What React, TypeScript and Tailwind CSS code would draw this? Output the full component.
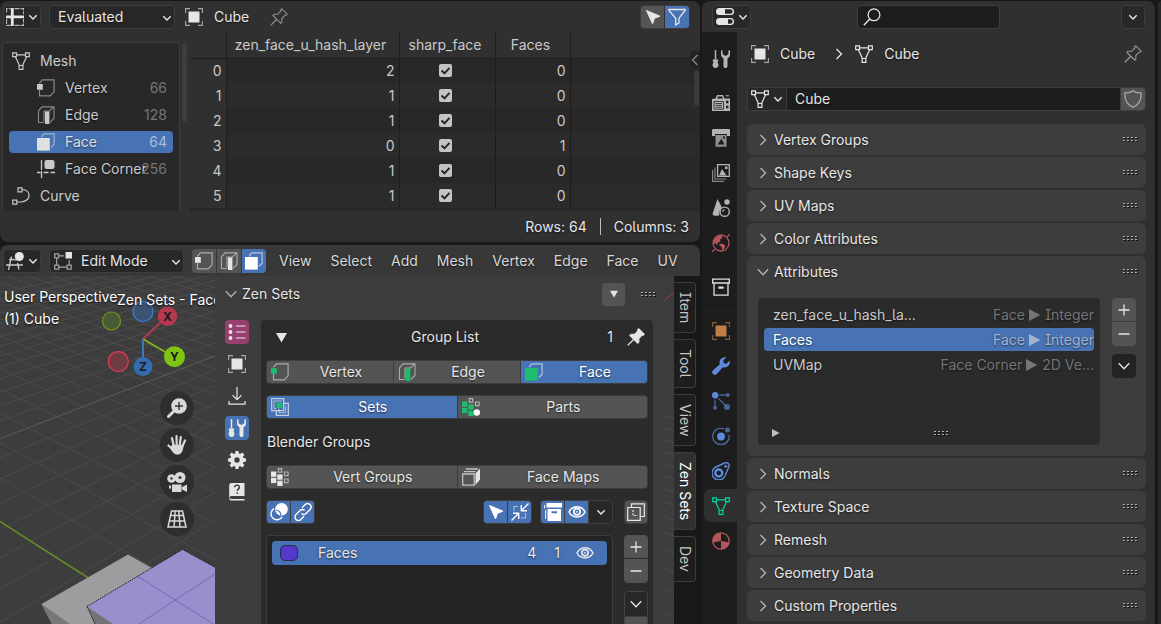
import React from "react";

type IconProps = { className?: string; accent?: string };

function Svg({ children, className = "" }: { children: React.ReactNode; className?: string }) {
  return (
    <svg viewBox="0 0 18 18" width="18" height="18" fill="none" stroke="currentColor" aria-hidden="true" className={`shrink-0 ${className}`}>
      {children}
    </svg>
  );
}

/* ---------- icons ---------- */

const ChevronDown = ({ className = "" }: IconProps) => (
  <svg viewBox="0 0 10 10" width="10" height="10" fill="none" stroke="currentColor" strokeWidth="1.4" aria-hidden="true" className={`shrink-0 ${className}`}>
    <path d="M1.3 3.2 5 7l3.7-3.8" />
  </svg>
);
const ChevronWide = ({ className = "" }: IconProps) => (
  <svg viewBox="0 0 12 12" width="12" height="12" fill="none" stroke="currentColor" strokeWidth="1.3" aria-hidden="true" className={`shrink-0 ${className}`}>
    <path d="M.8 3.2 6 8.800l5.200-5.600" />
  </svg>
);
const ChevronRight = ({ className = "" }: IconProps) => (
  <svg viewBox="0 0 8 12" width="8" height="12" fill="none" stroke="currentColor" strokeWidth="1.300" aria-hidden="true" className={`shrink-0 ${className}`}>
    <path d="M1.500 1 6.500 6 1.500 11" />
  </svg>
);
const SpreadsheetIcon = () => (
  <Svg>
    <path d="M.6 4.500V.6H4.500M8.500.6h9v5.600M.6 11v6.400h4M8.500 17.400h9V11" strokeWidth="1.100" opacity=".75" strokeDasharray="5 1" />
    <path d="M6.300 0v18M0 8.800h18" strokeWidth="2.800" />
  </Svg>
);
const ObjectIcon = ({ className = "" }: IconProps) => (
  <Svg className={className}>
    <path d="M.6 5V.6H5M13 .6h4.400V5M17.400 13v4.400H13M5 17.400H.6V13" strokeWidth="1.100" opacity=".65" />
    <rect x="3.500" y="3.500" width="11" height="11" fill="currentColor" stroke="none" />
  </Svg>
);
const PinIcon = ({ filled = false }: { filled?: boolean }) => (
  <Svg>
    <path d="M.7 17.400 6.600 11.500" strokeWidth="1.300" />
    <path d="M11.800.8 17.200 6.200l-1 1.100-1.200-.1-3.200 3.300.1 3.500-1.200 1.200-7.800-7.800L4.100 6.200l3.500.1L10.900 3l-.1-1.200z" strokeWidth="1.100" fill={filled ? "currentColor" : "none"} />
  </Svg>
);
const CursorIcon = () => (
  <Svg>
    <path d="M2.500 2.500 16 8.200 10.500 10.300 8.500 15.800z" fill="currentColor" strokeWidth="1" />
  </Svg>
);
const FilterIcon = () => (
  <Svg>
    <path d="M.9 1.500h16.200v1L11 10.200v4.600l-3.300 2.100V10.200L.9 2.500z" strokeWidth="1.300" />
  </Svg>
);
const MeshIcon = ({ className = "" }: IconProps) => (
  <Svg className={className}>
    <path d="M4.500 2.800h9M3.400 4.700l4.100 8.800M14.600 4.700l-4.100 8.800" strokeWidth="1.200" />
    <path d="M.7.8h3.800v3.800H.7zM13.500.8h3.800v3.800h-3.800zM7.100 13.500h3.800v3.800H7.100z" strokeWidth="1.200" />
  </Svg>
);
const VertexIcon = ({ accent = "currentColor" }: IconProps) => (
  <Svg>
    <path d="M2.500 4.500V4L5.500.9H17.100V12.800L13.200 16.900H2.500V11" strokeWidth="1.200" opacity=".6" />
    <rect x="0" y="5" width="5.800" height="5.800" fill={accent} stroke="none" />
  </Svg>
);
const EdgeIcon = ({ accent = "currentColor" }: IconProps) => (
  <Svg>
    <path d="M7 16.500H1.500V4.800L5 .9H17V12.200L13 16.300M7 15.500V5h5.500L16.500 1.200" strokeWidth="1.100" opacity=".6" />
    <rect x="8" y="5.500" width="4.400" height="12.500" fill={accent} stroke="none" />
  </Svg>
);
const FaceIcon = ({ accent = "currentColor" }: IconProps) => (
  <Svg>
    <path d="M4.600 4.600V3.500L6.600.9H17.100V11.500L14 14.300" strokeWidth="1.200" opacity=".6" />
    <rect x="0" y="5" width="12.800" height="12.600" fill={accent} stroke="none" />
  </Svg>
);
const CornerIcon = () => (
  <Svg>
    <rect x="7.500" y="0" width="10" height="9" rx="2" fill="currentColor" stroke="none" />
    <path d="M4.500 0v10M0 12.500h3.500M4.500 11v7M6.500 12.500h5M13.500 12.500H18" strokeWidth="1.300" />
  </Svg>
);
const CurveIcon = () => (
  <Svg>
    <path d="M6 .8h4v4H6zM.8 13.200h4v4h-4zM10 2.500c9.500.5 9.500 11-.5 12.500H4.800" strokeWidth="1.200" />
  </Svg>
);
const View3dIcon = () => (
  <Svg>
    <circle cx="13.300" cy="4.500" r="4.500" fill="currentColor" stroke="none" />
    <path d="M3 7.500h5M0 13h17M5.500 4.500 2.500 18M11.500 11l1.500 6.500M8 7.800h3" strokeWidth="1.300" opacity=".85" />
  </Svg>
);
const EditModeIcon = () => (
  <Svg>
    <path d="M.7 1.800h4v4h-4zM.7 13.200h4v4h-4zM13.200 13.200h4v4h-4zM4.700 3.800H10M2.700 5.800v7.400M4.700 15.200h8.500M15.200 8v5.200" strokeWidth="1.200" opacity=".65" />
    <rect x="11.500" y="0" width="6.500" height="6.500" fill="currentColor" stroke="none" />
  </Svg>
);
const ListIcon = () => (
  <Svg>
    <path d="M8 3h9.500M8 9h9.500M8 15h9.500" strokeWidth="1.200" />
    <g fill="currentColor" stroke="none">
      <circle cx="2.500" cy="3" r="1.900" /><circle cx="2.500" cy="9" r="1.900" /><circle cx="2.500" cy="15" r="1.900" />
    </g>
  </Svg>
);
const ImportIcon = () => (
  <Svg>
    <path d="M9 0v12.500M4.500 8.200 9 12.700l4.500-4.500M1 14v3.200h16V14" strokeWidth="1.200" />
  </Svg>
);
const ToolIcon = ({ className = "" }: IconProps) => (
  <Svg className={className}>
    <path d="M3.500 0v9" strokeWidth="1.500" />
    <path d="M.5 10.500c0-1.800 6-1.800 6 0l-1 1.500 1 2.500c.3 4.700-6.300 4.700-6 0l1-2.500z" fill="currentColor" stroke="none" />
    <path d="M9 .6v4.200c0 2 1.500 3 2.500 3.600v7.800c0 2.400 4 2.400 4 0V8.400c1-.6 2.500-1.600 2.500-3.600V.6l-1.600-.3v3.900l-2.900 1.700-2.900-1.700V.3z" fill="currentColor" stroke="none" />
  </Svg>
);
const GearIcon = () => (
  <Svg>
    <g fill="currentColor" stroke="none">
      <path fillRule="evenodd" d="M7.500 0h3l.4 2.600 1.300.5 2.100-1.500 2.100 2.100-1.500 2.100.5 1.300 2.600.4v3l-2.600.4-.5 1.300 1.500 2.100-2.100 2.100-2.100-1.500-1.300.5-.4 2.600h-3l-.4-2.600-1.300-.5-2.100 1.500-2.100-2.100 1.500-2.100-.5-1.300L0 10.500v-3l2.600-.4.5-1.300-1.500-2.100 2.100-2.100 2.100 1.500 1.300-.5zM9 6.300a2.700 2.700 0 1 0 0 5.400 2.700 2.700 0 0 0 0-5.400z" />
    </g>
  </Svg>
);
const HelpIcon = () => (
  <Svg>
    <path fillRule="evenodd" d="M3.500 0H16.500V13H3.500C1 13 1 16 3.500 16H16.500V17.500H3.500C1.500 17.500 1.200 16 1.200 14.500V2.500C1.200.8 2 0 3.500 0z" fill="currentColor" stroke="none" />
    <path d="M6.600 4.300c.2-3 5-2.800 4.800.1-.1 1.800-2.200 1.700-2.200 3.600M9.200 9.500v1.500" strokeWidth="1.400" className="stroke-[#3b3b3b]" />
  </Svg>
);
const SetsIcon = () => (
  <Svg>
    <path d="M.7.7h12v12H.7zM13 5.300h4.300v12h-12V13" strokeWidth="1.300" opacity=".65" />
    <path d="M10.500 3H3v7.500h2M8 10.500v4.200h6.700V8" strokeWidth="1" opacity=".55" />
    <rect x="5.500" y="4.500" width="5.600" height="5.600" className="fill-[#1ebd6e]" stroke="none" />
  </Svg>
);
const PartsIcon = ({ accent = "currentColor", dot = false }: { accent?: string; dot?: boolean }) => (
  <Svg>
    <g fill={accent} stroke="none">
      <rect x="0" y="3.500" width="5.300" height="5.300" /><rect x="0" y="9.800" width="5.300" height="5.300" />
      <rect x="6.300" y="6.400" width="5.300" height="5.300" /><rect x="6.300" y="12.700" width="5.300" height="5.300" />
    </g>
    <path d="M7.300.7h3.400v3.400H7.300zM13.500 4h3.600v3.600h-3.600z" strokeWidth="1.200" opacity=".65" />
    {dot ? <circle cx="14.800" cy="14.500" r="3.200" fill="white" stroke="none" /> : <path d="M13.500 11h3.600v3.600h-3.600z" strokeWidth="1.200" opacity=".65" />}
  </Svg>
);
const FaceMapIcon = () => (
  <Svg>
    <path d="M.7 6h11.500v11.200H.7zM2 3.600h11.500M4 1h12" strokeWidth="1.300" opacity=".75" />
    <path d="M13.500 5.500 18 .5v11L13.500 17z" fill="currentColor" stroke="none" />
  </Svg>
);
const OverlayIcon = () => (
  <Svg>
    <circle cx="11.500" cy="6.300" r="6.300" fill="currentColor" stroke="none" />
    <path d="M4 5.600a6 6 0 1 0 8.200 8.200" strokeWidth="1.400" />
    <path d="M6 7a6 6 0 0 1 5 5.300" strokeWidth="1.200" className="stroke-[#4772b3]" />
  </Svg>
);
const LinkIcon = () => (
  <Svg>
    <path d="M8 4.800 11.200 1.600a3.300 3.300 0 0 1 4.800 4.800L12 10.400a3.300 3.300 0 0 1-4.600 0M10 13.200 6.800 16.400a3.300 3.300 0 0 1-4.800-4.800L6 7.600a3.300 3.300 0 0 1 4.600 0" strokeWidth="1.400" />
  </Svg>
);
const CollapseIcon = () => (
  <Svg>
    <path d="M3 8V3.500h4M14.500 10v5H10" strokeWidth="1.200" opacity=".5" />
    <path d="M17.500.5 10.500 7.500M10.300 2v5.700H16M.5 17.500l7-7M2 10.300h5.700V16" strokeWidth="1.400" />
  </Svg>
);
const ArchiveIcon = () => (
  <Svg>
    <path fillRule="evenodd" d="M2.500 0H18v4.500H2.500zM3.500 6H17v12H3.500zM7.500 8.200v2h5.500v-2z" fill="currentColor" stroke="none" />
    <path d="M.6 2v3.500M1.600 7v9" strokeWidth="1.200" opacity=".8" />
  </Svg>
);
const EyeIcon = () => (
  <Svg>
    <path d="M1 9c3.500-7 12.500-7 16 0-3.500 6.500-12.500 6.500-16 0z" strokeWidth="1.500" />
    <circle cx="9" cy="8.800" r="3.100" strokeWidth="1.700" />
    <circle cx="9" cy="8.800" r=".9" fill="currentColor" stroke="none" />
  </Svg>
);
const DuplicateIcon = () => (
  <Svg>
    <path d="M.7 4.500h12.500v12.800H.7zM4.500 4.500V.8h12.800v12.700h-4" strokeWidth="1.200" />
    <path d="M6 7v5.500h5" strokeWidth="1.200" strokeDasharray="2 1.300" />
  </Svg>
);
const PlusIcon = () => <Svg><path d="M9 3.500v11M3.500 9h11" strokeWidth="1.300" /></Svg>;
const MinusIcon = () => <Svg><path d="M3.500 9h11" strokeWidth="1.300" /></Svg>;
const PropertiesIcon = () => (
  <Svg>
    <path fillRule="evenodd" d="M3.500 0h11a3.500 3.500 0 0 1 0 7h-11a3.500 3.500 0 0 1 0-7zM9 1.200v4.600h5.300a2.300 2.300 0 0 0 0-4.600zM3.500 10h11a3.500 3.500 0 0 1 0 7h-11a3.500 3.500 0 0 1 0-7zM12 11.200v4.600h2.400a2.300 2.300 0 0 0 0-4.600z" fill="currentColor" stroke="none" />
  </Svg>
);
const SearchIcon = () => <Svg><circle cx="11" cy="6.800" r="5.900" strokeWidth="1.300" /><path d="M6.800 11 .8 17.200" strokeWidth="1.400" /></Svg>;
const ShieldIcon = () => <Svg><path d="M9 .8c2.500 2 5 2.200 8 2 .6 6.500-1.600 11.500-8 14.400C2.600 14.300.4 9.300 1 2.800c3 .2 5.500 0 8-2z" strokeWidth="1.300" /></Svg>;
const RenderIcon = () => (
  <Svg>
    <path fillRule="evenodd" d="M0 5 3.500 4.500 5 1h6l1.500 3.500H18V17H0zM14 6.800v2.400h2.400V6.800zM14 11.800v2.400h2.400v-2.400zM5.800 2.500 5.200 4.500h5.600l-.6-2z" fill="currentColor" stroke="none" />
    <path d="M2 7.500h9.500v7.700H2z" strokeWidth="0.800" className="stroke-[#1d1d1d]" />
    <path d="M3.500 9.500H10M3.500 11.400H10M3.500 13.300H10" strokeWidth=".8" className="stroke-[#1d1d1d]" />
    <path d="M13.500 1.800H17" strokeWidth="1" />
  </Svg>
);
const OutputIcon = () => (
  <Svg>
    <path d="M1 0h16l1 1v6h-3V5H3v2H0V1z" fill="currentColor" stroke="none" />
    <path fillRule="evenodd" d="M3.500 6h11v11.800h-11zM5.500 15.500h7L9.500 9.800zM11 7.500v2h2v-2z" fill="currentColor" stroke="none" opacity=".75" />
  </Svg>
);
const LayersIcon = () => (
  <Svg>
    <path d="M.6 6v11.400H12M3 3.500V15h11.500" strokeWidth="1.200" opacity=".7" />
    <path d="M5.600.7h11.700v11.700H5.600z" strokeWidth="1.300" />
    <path d="M7 11.500 10 5l4.500 6.500zM13 2.500h2.500V5H13z" fill="currentColor" stroke="none" />
  </Svg>
);
const SceneIcon = () => (
  <Svg>
    <path d="M5.500 0 10 8.500c-2.500 2-3.300 4.500-2.500 7.500C5 17.500 1 17 .5 15z" fill="currentColor" stroke="none" />
    <circle cx="15" cy="3" r="2.700" fill="currentColor" stroke="none" />
    <circle cx="12.700" cy="12.700" r="4.600" strokeWidth="1.400" /><path d="M10.800 13a2.200 2.200 0 0 1 2-2.300" strokeWidth="1.100" />
  </Svg>
);
const WorldIcon = () => (
  <Svg>
    <circle cx="9" cy="9" r="8" strokeWidth="1.300" />
    <path d="M.2 17.800 2.800 15.200M15.200 2.800 17.800.2" strokeWidth="1.400" />
    <path d="M2 6.500C3.500 3 6 1.800 9.500 1.500L10.500 3 9.200 5 8 5.500l.5 2-2.500 1-1 2.500-1.500-1.500L1.800 9.500zM7.500 10l3.500-.2 2.500 2.200-2 3.500-1.300.5-.7-3-2-1.500z" fill="currentColor" stroke="none" />
  </Svg>
);
const CollectionIcon = () => (
  <Svg><path d="M.7 1.200h16.600V5H.7zM2 5.500v11.600h14V5.500" strokeWidth="1.300" /><rect x="6.200" y="8.500" width="5.600" height="2.300" rx="1" fill="currentColor" stroke="none" /></Svg>
);
const WrenchIcon = () => (
  <Svg><path d="M14.300.3C9.500-.4 6.700 3.300 7.800 7.200L.8 13.400c-2.200 2.400 1.300 6 3.800 3.800l6.200-7c4 1.100 7.800-1.700 6.900-6.600l-3.400 3.100-2.400-.5-.7-2.700z" fill="currentColor" stroke="none" /></Svg>
);
const ParticlesIcon = () => (
  <Svg>
    <g fill="currentColor" stroke="none"><circle cx="3.200" cy="3.200" r="3.200" /><g opacity=".65"><circle cx="15.800" cy="3" r="2" /><circle cx="3" cy="15.800" r="2" /><circle cx="15" cy="15" r="3" /></g></g>
    <path d="M7.500 3H14M3 7.500V14M6.500 6.500l7 7" strokeWidth="1.300" opacity=".65" />
  </Svg>
);
const PhysicsIcon = () => (
  <Svg>
    <circle cx="9" cy="9.500" r="3.900" fill="currentColor" stroke="none" />
    <path d="M12 1.900A8.200 8.200 0 1 0 17 8" strokeWidth="1.200" opacity=".75" />
    <circle cx="15.500" cy="3" r="2.500" fill="currentColor" stroke="none" opacity=".65" />
  </Svg>
);
const ConstraintIcon = () => (
  <Svg>
    <path d="M3 5.500 12.500 1c3-1.200 5.300 1 4.500 3.500l-4 9.500A6.800 6.800 0 1 1 3 5.500z" strokeWidth="1.400" />
    <circle cx="6.800" cy="11" r="3.500" strokeWidth="2.400" /><path d="M13.700 2.700v3.400M12 4.400h3.400" strokeWidth="1.100" />
  </Svg>
);
const MaterialIcon = () => (
  <Svg>
    <circle cx="9" cy="9" r="8.200" strokeWidth="1.300" />
    <path d="M9 .8V9L1 10.500C0 4 4 .8 9 .8zM9 9l8.500 1.500C16.500 15 13.500 17 9 17.200z" fill="currentColor" stroke="none" />
  </Svg>
);
const ZoomIcon = () => (
  <svg viewBox="0 0 20 20" width="20" height="20" aria-hidden="true">
    <path d="M1.500 18.500 7.500 12.500" stroke="#d9d9d9" strokeWidth="3" strokeLinecap="round" />
    <circle cx="12" cy="8" r="7.800" fill="#d9d9d9" /><path d="M12 4v8M8 8h8" stroke="#333" strokeWidth="1.400" />
  </svg>
);
const HandIcon = () => (
  <svg viewBox="0 0 20 20" width="20" height="20" fill="none" stroke="#d9d9d9" strokeLinecap="round" aria-hidden="true">
    <path d="M6.500 10 5 3M9.700 9 9.500 1.200M12.800 9.500l1-7.300M15.500 11l2.500-5.500M6 14.500 1.500 10.500" strokeWidth="2.200" />
    <path d="M5.500 9.500 16.600 10c-.1 4-1.600 9-4.600 9.500H9c-3-.8-4-3.500-6-6.500z" fill="#d9d9d9" stroke="none" />
  </svg>
);
const CameraIcon = () => (
  <svg viewBox="0 0 20 20" width="20" height="20" fill="#d9d9d9" aria-hidden="true">
    <circle cx="4.500" cy="6.500" r="4.300" /><circle cx="13" cy="5.500" r="5.500" /><path d="M5 12.500h9.500V20H5zM2 13.500h2v3H2zM15 15l5-2.500V20l-5-2.500z" />
    <circle cx="4.500" cy="6.500" r="1.200" fill="#333" /><circle cx="13" cy="5.500" r="1.500" fill="#333" />
  </svg>
);
const PerspIcon = () => (
  <svg viewBox="0 0 20 20" width="20" height="20" fill="none" stroke="#d9d9d9" strokeWidth="1.500" aria-hidden="true">
    <path d="M4.500 2h11L19 18H1zM3.500 6.500h13M2.300 12h15.400M8.200 2 7 18M11.800 2 13 18" />
  </svg>
);
const Triangle = ({ className = "", down = false, size = 10 }: { className?: string; down?: boolean; size?: number }) => (
  <svg viewBox="0 0 10 10" width={size} height={size} fill="currentColor" aria-hidden="true" className={`inline-block shrink-0 ${className}`}>
    <path d={down ? "M0 1h10L5 9.500z" : "M0 0v10L9.500 5z"} />
  </svg>
);
const Grip = ({ className = "" }: IconProps) => (
  <svg viewBox="0 0 15 7" width="15" height="7" aria-hidden="true" className={`shrink-0 ${className}`}>
    {[0, 4, 8, 12].map((x) => (
      <g key={x}>
        <path d={`M${x} 1h2v1h-2zM${x} 4h2v1h-2z`} fill="#b0b0b0" />
        <path d={`M${x + 1} 2h2v1h-2zM${x + 1} 5h2v1h-2z`} fill="#111" />
      </g>
    ))}
  </svg>
);

/* ---------- spreadsheet ---------- */

const GREEN = "#1ebd6e";
const shadow = "[text-shadow:0_1px_2px_rgba(0,0,0,0.6)]";
const fieldBtn = "flex h-6 items-center rounded border border-[#3d3d3d] bg-[#282828] text-[#e6e6e6]";

const domains = [
  { name: "Vertex", count: 66, icon: <VertexIcon /> },
  { name: "Edge", count: 128, icon: <EdgeIcon /> },
  { name: "Face", count: 64, icon: <FaceIcon />, active: true },
  { name: "Face Corner", count: 256, icon: <CornerIcon /> },
];
const rows = [
  [2, 0], [1, 0], [1, 0], [0, 1], [1, 0], [1, 0],
];

function Spreadsheet() {
  return (
    <section className="relative flex h-[241px] shrink-0 flex-col overflow-hidden rounded-lg bg-[#303030]">
      <header className="flex h-[31px] shrink-0 items-center pl-[3px] pr-[10px]">
        <button aria-label="Editor type" className={`${fieldBtn} w-[38px] justify-center gap-1`}>
          <SpreadsheetIcon /><ChevronDown />
        </button>
        <div className="relative ml-2">
          <select aria-label="Object evaluation state" className={`${fieldBtn} w-[126px] appearance-none pl-2 ${shadow}`}>
            <option>Evaluated</option>
          </select>
          <ChevronDown className="pointer-events-none absolute right-[3px] top-[8px]" />
        </div>
        <ObjectIcon className="ml-[10px]" />
        <span className={`ml-[11px] mr-[21px] ${shadow}`}>Cube</span>
        <button aria-label="Pin" className="text-[#8f8f8f]"><PinIcon /></button>
        <div className="ml-auto flex gap-px overflow-hidden rounded border border-[#3d3d3d]">
          <button aria-label="Show only selected" className="flex h-[22px] w-[23px] items-center justify-center bg-[#545454]"><CursorIcon /></button>
          <button aria-label="Use filter" className="flex h-[22px] w-6 items-center justify-center bg-[#4772b3]"><FilterIcon /></button>
        </div>
      </header>
      <div className="flex min-h-0 flex-1 pl-[2px]">
        <div className="flex w-[188px] shrink-0 gap-[2px] pt-[10px]">
          <div className="w-[178px] overflow-hidden rounded-t border border-b-0 border-[#3d3d3d] bg-[#282828] px-[6px] pt-1 text-[#c9c9c9]">
            <button className="flex h-[27px] w-full items-center gap-[10px] pl-[3px]"><MeshIcon />Mesh</button>
            {domains.map((d) => (
              <button key={d.name} className={`flex h-[27px] w-full items-center ${d.active ? "text-[#e0e0e0]" : ""}`}>
                <span className={`flex h-[22px] w-full items-center rounded pl-7 pr-[6px] ${d.active ? "bg-[#4772b3]" : ""}`}>
                  {d.icon}
                  <span className={`ml-[10px] whitespace-nowrap ${shadow}`}>{d.name}</span>
                  <span className="ml-auto w-0"><span className={`float-right ${d.active ? "text-[#a9bddd]" : "text-[#757575]"}`}>{d.count}</span></span>
                </span>
              </button>
            ))}
            <button className="flex h-[27px] w-full items-center gap-[10px] pl-[3px]"><CurveIcon />Curve</button>
          </div>
          <div className="mt-[1px] h-[79px] w-[5px] rounded-full bg-[#3d3d3d]" />
        </div>
        <div className="min-w-0 flex-1 overflow-hidden bg-[#282828]">
          <table className="w-full table-fixed border-collapse text-[#c9c9c9]">
            <colgroup><col className="w-[36px]" /><col className="w-[173px]" /><col className="w-[96px]" /><col className="w-[75px]" /><col /></colgroup>
            <thead>
              <tr className="h-[26px] border-b border-[#1d1d1d] bg-[#303030]">
                <th className="border-r border-[#1d1d1d]" />
                {["zen_face_u_hash_layer", "sharp_face", "Faces"].map((h) => (
                  <th key={h} className="whitespace-nowrap border-r border-[#1d1d1d] py-0 pl-0 pr-1 text-center font-normal">{h}</th>
                ))}
                <th />
              </tr>
            </thead>
            <tbody>
              {rows.map(([hash, face], i) => (
                <tr key={i} className="h-[25px] odd:bg-[#282828] even:bg-[#2b2b2b]">
                  <td className="border-r border-[#1d1d1d] bg-[#303030] py-0 pl-0 pr-1 text-right">{i}</td>
                  <td className="border-r border-[#1d1d1d] py-0 pl-0 pr-1 text-right">{hash}</td>
                  <td className="border-r border-[#1d1d1d] py-0 pl-0 pr-1">
                    <span className="relative mx-auto flex size-[13px]">
                      <input type="checkbox" defaultChecked aria-label={`sharp_face ${i}`} className="size-[13px] appearance-none rounded-[2px] bg-[#c4c4c4]" />
                      <svg viewBox="0 0 13 13" className="pointer-events-none absolute inset-0" fill="none" stroke="#282828" strokeWidth="2"><path d="M2.500 6.500 5.500 9.300 10.500 3.800" /></svg>
                    </span>
                  </td>
                  <td className="border-r border-[#1d1d1d] py-0 pl-0 pr-1 text-right">{face}</td>
                  <td />
                </tr>
              ))}
            </tbody>
          </table>
        </div>
      </div>
      <footer className={`flex h-[31px] shrink-0 items-center justify-end gap-[13px] pr-[11px] ${shadow}`}>
        <span>Rows: 64</span><span className="h-[17px] w-px bg-[#bdbdbd]" /><span>Columns: 3</span>
      </footer>
      <div className="absolute right-0 top-[50px] flex h-[17px] w-[10px] items-center justify-center rounded-l bg-[#232323] text-[#8a8a8a]">
        <ChevronRight className="rotate-180" />
      </div>
      <div className="absolute right-px top-[69px] h-9 w-[5px] rounded-full bg-[#3a3a3a]" />
    </section>
  );
}

/* ---------- 3D viewport ---------- */

const gridA = [605, 500, 412, 340, 278, 225, 180, 140, 105, 73, 44, 18, -6, -28, -50, -70, -90, -110, -130, -150];
const gridB = [1150, 1040, 938, 845, 760, 681, 608, 545, 435, 390, 348, 308, 272, 240, 210, 182, 156, 132, 110, 90, 70, 50];
const line = (y0: number, slope: number) => `M0 ${y0 / 3}L680 ${y0 / 3 + slope * 680}`;

function Scene() {
  return (
    <svg className="absolute left-0 top-0 h-[348px] w-[680px]" viewBox="0 0 680 348" fill="none" aria-hidden="true">
      <g stroke="#4b4b4b" strokeWidth="1">
        {gridA.map((y) => <path key={y} d={line(y, 0.64 - (735 - y) * 0.0004)} />)}
        {gridB.map((y) => <path key={y} d={line(y, -0.385 - (y - 488) * 0.0004)} />)}
      </g>
      <path d={line(488, -0.385)} stroke="#5c5c5c" />
      <path d="M0 245.500 90 303" stroke="#628a26" strokeWidth="1.500" />
      <path d="M664 25 674 17" stroke="#a03a48" />
      <path d="M41.500 328 128 278.500 152 292 100 348H52z" fill="#9c9d9e" />
      <path d="M41.500 328 52 348H70z" fill="#767877" />
      <path d="M87 330.500 182.500 273.500 240 305V348H112z" fill="#9a8fcd" />
      <path d="M87 330.500 95 348H113z" fill="#737376" />
      <path d="M138 300.500 215 349M139 348 215 298" stroke="#7668b8" />
      <path d="M87 330.500 182.500 273.500 240 305M87 330.500 95 348" stroke="#1a1a1a" strokeDasharray="1.500 1" />
      <g strokeWidth="2">
        <path d="M143 63 162 45" stroke="#b4384f" /><path d="M143 63 167 77" stroke="#7fb41c" /><path d="M143 63V82" stroke="#3a78c0" />
      </g>
      <circle cx="111.500" cy="45" r="9" fill="#4a5a34" stroke="#6b9c22" strokeWidth="1.200" />
      <circle cx="143" cy="35.500" r="10" fill="#3b5270" stroke="#2f83e8" strokeWidth="1.200" />
      <circle cx="118.300" cy="85.600" r="10" fill="#6f3c43" stroke="#e43a56" strokeWidth="1.200" />
      <circle cx="167.500" cy="40.300" r="9.700" fill="#b4384f" />
      <circle cx="174.500" cy="80.700" r="10.500" fill="#7fc314" />
      <circle cx="143" cy="90.600" r="9.500" fill="#356cb0" />
      <g fill="#1c1c1c" stroke="none" fontSize="12" fontWeight="700" textAnchor="middle" fontFamily="Inter, sans-serif">
        <text x="167.500" y="44.500">X</text><text x="174.500" y="85">Y</text><text x="143" y="95">Z</text>
      </g>
    </svg>
  );
}

const sideTabs = ["Item", "Tool", "View", "Zen Sets", "Dev"];
const menus = ["View", "Select", "Add", "Mesh", "Vertex", "Edge", "Face", "UV"];
const zenTools = [
  { label: "Groups", icon: <ListIcon />, bg: "bg-[#974070]" },
  { label: "Object", icon: <ObjectIcon />, bg: "" },
  { label: "Import", icon: <ImportIcon />, bg: "" },
  { label: "Tools", icon: <ToolIcon />, bg: "bg-[#4772b3]" },
  { label: "Settings", icon: <GearIcon />, bg: "" },
  { label: "Help", icon: <HelpIcon />, bg: "" },
];

type Seg = { label: string; icon: React.ReactNode; active?: boolean };
function Segments({ items }: { items: Seg[] }) {
  return (
    <div className="flex h-6 gap-px overflow-hidden rounded border border-[#3d3d3d] bg-[#3d3d3d]">
      {items.map((s) => (
        <button key={s.label} className={`flex min-w-0 flex-1 items-center pl-1 ${shadow} ${s.active ? "bg-[#4772b3] text-white" : "bg-[#545454]"}`}>
          {s.icon}<span className="flex-1 text-center">{s.label}</span>
        </button>
      ))}
    </div>
  );
}
function IconGroup({ items }: { items: Seg[] }) {
  return (
    <div className="flex h-6 gap-px overflow-hidden rounded border border-[#3d3d3d] bg-[#3d3d3d]">
      {items.map((s) => (
        <button key={s.label} aria-label={s.label} className={`flex w-[23px] items-center justify-center ${s.active ? "bg-[#4772b3] text-white" : "bg-[#282828]"}`}>{s.icon}</button>
      ))}
    </div>
  );
}
function AddRemove() {
  return (
    <div className="flex flex-col gap-px overflow-hidden rounded">
      <button aria-label="Add" className="flex h-[23px] w-6 items-center justify-center bg-[#545454]"><PlusIcon /></button>
      <button aria-label="Remove" className="flex h-6 w-6 items-center justify-center bg-[#545454]"><MinusIcon /></button>
    </div>
  );
}

function ZenPanel() {
  return (
    <div className="absolute inset-y-0 left-[215px] right-[36px] overflow-hidden bg-[#3d3d3d] pl-[10px]">
      <div className="flex h-9 items-center pr-2">
        <ChevronWide className="text-[#b5b5b5]" />
        <span className={`ml-[5px] ${shadow}`}>Zen Sets</span>
        <button aria-label="Panel options" className="ml-auto mr-4 flex size-[23px] items-center justify-center rounded bg-[#545454]"><Triangle down size={8} /></button>
        <Grip />
      </div>
      <div className="flex gap-3 pr-[11px] pt-2">
        <div className="flex flex-col gap-2">
          {zenTools.map((t) => (
            <button key={t.label} aria-label={t.label} className={`flex size-6 items-center justify-center rounded ${t.bg}`}>{t.icon}</button>
          ))}
        </div>
        <div className="flex min-h-[330px] min-w-0 flex-1 flex-col gap-[11px] rounded bg-[#2b2b2b] px-[5px] pt-[5px]">
          <div className={`relative flex h-6 items-center justify-center ${shadow}`}>
            <Triangle down size={11} className="absolute left-[10px] top-[7px]" />
            <span className="pr-6">Group List</span>
            <div className="absolute right-[3px] flex items-center gap-[14px]"><span>1</span><PinIcon filled /></div>
          </div>
          <Segments items={[{ label: "Vertex", icon: <VertexIcon accent={GREEN} /> }, { label: "Edge", icon: <EdgeIcon accent={GREEN} /> }, { label: "Face", icon: <FaceIcon accent={GREEN} />, active: true }]} />
          <Segments items={[{ label: "Sets", icon: <SetsIcon />, active: true }, { label: "Parts", icon: <PartsIcon accent={GREEN} dot /> }]} />
          <div className={`flex h-6 items-center pl-px ${shadow}`}>Blender Groups</div>
          <Segments items={[{ label: "Vert Groups", icon: <PartsIcon /> }, { label: "Face Maps", icon: <FaceMapIcon /> }]} />
          <div className="flex h-6">
            <IconGroup items={[{ label: "Overlay", icon: <OverlayIcon />, active: true }, { label: "Link", icon: <LinkIcon />, active: true }]} />
            <div className="ml-auto"><IconGroup items={[{ label: "Select", icon: <CursorIcon />, active: true }, { label: "Frame", icon: <CollapseIcon />, active: true }]} /></div>
            <div className="ml-2"><IconGroup items={[{ label: "Archive", icon: <ArchiveIcon />, active: true }, { label: "Visibility", icon: <EyeIcon />, active: true }, { label: "More", icon: <ChevronDown /> }]} /></div>
            <button aria-label="Duplicate" className="ml-[11px] flex w-6 items-center justify-center rounded border border-[#3d3d3d] bg-[#545454]"><DuplicateIcon /></button>
          </div>
          <div className="flex gap-[11px]">
            <div className="h-[140px] min-w-0 flex-1 rounded border border-[#3d3d3d] bg-[#242424] p-[5px]">
              <button className={`flex h-6 w-full items-center rounded bg-[#4772b3] pl-2 pr-[13px] ${shadow}`}>
                <span className="h-4 w-[18px] rounded-[5px] border border-[#2c2c50] bg-[#5538cc]" />
                <span className="ml-5">Faces</span>
                <span className="ml-auto">4</span><span className="ml-[18px] mr-[16px]">1</span><EyeIcon />
              </button>
            </div>
            <div className="flex flex-col">
              <AddRemove />
              <div className="mt-2 flex flex-col gap-px overflow-hidden rounded border border-[#444] bg-[#3d3d3d]">
                <button aria-label="Specials" className="flex h-6 w-[22px] items-center justify-center bg-[#282828]"><ChevronWide /></button>
                <span className="h-6 bg-[#545454]" />
              </div>
            </div>
          </div>
        </div>
      </div>
    </div>
  );
}

function Viewport() {
  const modes: Seg[] = [
    { label: "Vertex select", icon: <VertexIcon /> }, { label: "Edge select", icon: <EdgeIcon /> }, { label: "Face select", icon: <FaceIcon />, active: true },
  ];
  const nav = [
    { label: "Zoom", icon: <ZoomIcon /> }, { label: "Pan", icon: <HandIcon /> }, { label: "Camera view", icon: <CameraIcon /> }, { label: "Perspective", icon: <PerspIcon /> },
  ];
  return (
    <section className="flex min-h-0 flex-1 flex-col overflow-hidden rounded-t-lg bg-[#383838]">
      <header className="flex h-[31px] shrink-0 items-center pl-[3px]">
        <button aria-label="Editor type" className={`${fieldBtn} w-[38px] shrink-0 justify-center gap-1`}><View3dIcon /><ChevronDown /></button>
        <div className="relative ml-2 shrink-0">
          <span className="pointer-events-none absolute left-[5px] top-[3px]"><EditModeIcon /></span>
          <select aria-label="Interaction mode" className={`${fieldBtn} w-[135px] appearance-none pl-[31px] ${shadow}`}><option>Edit Mode</option></select>
          <ChevronDown className="pointer-events-none absolute right-[3px] top-[8px]" />
        </div>
        <div className="ml-2 flex h-6 shrink-0 gap-px overflow-hidden rounded">
          {modes.map((m) => (
            <button key={m.label} aria-label={m.label} className={`flex w-6 items-center justify-center ${m.active ? "bg-[#4772b3] text-white" : "bg-[#545454]"}`}>{m.icon}</button>
          ))}
        </div>
        <nav className="ml-[5px] flex gap-[3px]">
          {menus.map((m) => <button key={m} className={`h-6 rounded px-2 text-[#d8d8d8] ${shadow}`}>{m}</button>)}
        </nav>
      </header>
      <div className="relative min-h-0 flex-1 overflow-hidden bg-[#3d3d3d]">
        <Scene />
        <div className="absolute left-1 top-[10px] leading-[22px] text-white [text-shadow:0_1px_2px_rgba(0,0,0,0.9)]">
          <div>User Perspective</div><div>(1) Cube</div>
        </div>
        <div className="absolute left-[117px] top-[13px] whitespace-nowrap leading-[22px] text-white [text-shadow:0_1px_2px_rgba(0,0,0,0.9)]">Zen Sets - Face</div>
        <div className="absolute left-[160px] top-[115px] flex flex-col gap-[3px]">
          {nav.map((n) => <button key={n.label} aria-label={n.label} className="flex size-[34px] items-center justify-center rounded-full bg-[#2c2c2c]/90">{n.icon}</button>)}
        </div>
        <ZenPanel />
        <div className="absolute inset-y-0 right-0 flex w-[26px] flex-col items-start gap-[6px] bg-[#181818] pt-[6px]">
          {sideTabs.map((t) => (
            <button key={t} className={`flex w-[22px] justify-center rounded-r border border-l-0 border-[#3d3d3d] py-[9px] ${t === "Zen Sets" ? "bg-[#303030] text-white" : "bg-[#1d1d1d] text-[#c4c4c4]"}`}>
              <span className="leading-5 [writing-mode:vertical-rl]">{t}</span>
            </button>
          ))}
        </div>
      </div>
    </section>
  );
}

/* ---------- properties ---------- */

type NavItem = { label: string; icon: React.ReactNode; tone?: string };
const navGroups: NavItem[][] = [
  [{ label: "Tool", icon: <ToolIcon /> }],
  [
    { label: "Render", icon: <RenderIcon /> }, { label: "Output", icon: <OutputIcon /> }, { label: "View Layer", icon: <LayersIcon /> },
    { label: "Scene", icon: <SceneIcon /> }, { label: "World", icon: <WorldIcon />, tone: "text-[#b4545c]" },
  ],
  [{ label: "Collection", icon: <CollectionIcon />, tone: "text-[#e0e0e0]" }],
  [
    { label: "Object", icon: <ObjectIcon />, tone: "text-[#c27f45]" }, { label: "Modifiers", icon: <WrenchIcon />, tone: "text-[#5f8adb]" },
    { label: "Particles", icon: <ParticlesIcon />, tone: "text-[#5f8adb]" }, { label: "Physics", icon: <PhysicsIcon />, tone: "text-[#5f8adb]" },
    { label: "Constraints", icon: <ConstraintIcon />, tone: "text-[#5f8adb]" }, { label: "Data", icon: <MeshIcon />, tone: "text-[#00d6a3]" },
    { label: "Material", icon: <MaterialIcon />, tone: "text-[#b4545c]" },
  ],
];

function Panel({ title, children }: { title: string; children?: React.ReactNode }) {
  return (
    <div className="shrink-0 rounded-md bg-[#3d3d3d]">
      <button aria-expanded={!!children} className={`flex h-[31px] w-full items-center pr-2 ${shadow}`}>
        <span className="flex w-[27px] justify-center pl-[5px] text-[#b5b5b5]">{children ? <ChevronWide /> : <ChevronRight />}</span>
        {title}
        <Grip className="ml-auto" />
      </button>
      {children}
    </div>
  );
}

const attributes = [
  { name: "zen_face_u_hash_la...", domain: "Face", type: "Integer" },
  { name: "Faces", domain: "Face", type: "Integer", active: true },
  { name: "UVMap", domain: "Face Corner", type: "2D Ve..." },
];

function Properties() {
  return (
    <section className="flex min-h-0 min-w-0 flex-1 flex-col overflow-hidden rounded-t-lg bg-[#303030]">
      <header className="grid h-[31px] shrink-0 grid-cols-[1fr_auto_1fr] items-center px-[10px]">
        <button aria-label="Editor type" className={`${fieldBtn} w-[39px] justify-center gap-1`}><PropertiesIcon /><ChevronDown /></button>
        <label className="flex h-6 w-[143px] items-center rounded border border-[#3d3d3d] bg-[#1d1d1d] pl-[5px]">
          <SearchIcon /><input type="search" aria-label="Search" className="ml-1 w-full min-w-0 bg-transparent outline-none" />
        </label>
        <button aria-label="Options" className={`${fieldBtn} w-6 justify-center justify-self-end`}><ChevronDown /></button>
      </header>
      <div className="flex min-h-0 flex-1">
        <nav className="flex w-[35px] shrink-0 flex-col gap-2 bg-[#1d1d1d] pl-[2px] pt-[9px]">
          {navGroups.map((g, i) => (
            <div key={i} className="flex flex-col border-b border-[#181818]">
              {g.map((n) => (
                <button key={n.label} aria-label={n.label} className={`my-px flex h-[33px] items-center justify-center rounded-l-md ${n.tone ?? "text-[#b4b4b4]"} ${n.label === "Data" ? "bg-[#303030]" : ""}`}>{n.icon}</button>
              ))}
            </div>
          ))}
        </nav>
        <div className="flex min-w-0 flex-1 flex-col pl-[10px] pr-[9px]">
          <div className={`flex h-[43px] items-center pl-1 pr-1 ${shadow}`}>
            <ObjectIcon /><span className="ml-[11px]">Cube</span>
            <ChevronRight className="ml-5" />
            <MeshIcon className="ml-3" /><span className="ml-[11px]">Cube</span>
            <button aria-label="Pin" className="ml-auto text-[#9a9a9a]"><PinIcon /></button>
          </div>
          <div className="mb-[13px] mt-3 flex h-6 shrink-0 overflow-hidden rounded border border-[#3d3d3d]">
            <button aria-label="Browse mesh data" className="flex w-[38px] items-center justify-center gap-1 bg-[#282828]"><MeshIcon /><ChevronDown /></button>
            <input aria-label="Mesh name" defaultValue="Cube" className={`min-w-0 flex-1 border-x border-[#3d3d3d] bg-[#1d1d1d] px-2 outline-none ${shadow}`} />
            <button aria-label="Fake user" className="flex w-6 items-center justify-center bg-[#545454] text-[#a8a8a8]"><ShieldIcon /></button>
          </div>
          <div className="flex flex-col gap-[2px]">
            {["Vertex Groups", "Shape Keys", "UV Maps", "Color Attributes"].map((t) => <Panel key={t} title={t} />)}
            <Panel title="Attributes">
              <div className="flex gap-3 pb-[11px] pl-[11px] pr-[10px] pt-[11px]">
                <div className="flex h-[147px] min-w-0 flex-1 flex-col rounded bg-[#2b2b2b] px-[6px] pt-1">
                  {attributes.map((a) => (
                    <button key={a.name} className="flex h-[25px] items-center">
                      <span className={`flex h-[23px] w-full items-center rounded pl-[9px] ${shadow} ${a.active ? "bg-[#4772b3] text-white" : "text-[#c9c9c9]"}`}>
                        {a.name}
                        <span className={`ml-auto flex items-center gap-1 ${a.active ? "text-[#a3b3cf]" : "text-[#757575]"}`}>
                          {a.domain}<Triangle size={12} />{a.type}
                        </span>
                      </span>
                    </button>
                  ))}
                  <div className="relative mt-auto flex h-6 items-center justify-center pl-6">
                    <Triangle size={8} className="absolute left-2 text-[#c0c0c0]" /><Grip />
                  </div>
                </div>
                <div className="flex flex-col gap-2">
                  <AddRemove />
                  <button aria-label="Attribute specials" className="flex size-6 items-center justify-center rounded bg-[#232323]"><ChevronWide /></button>
                </div>
              </div>
            </Panel>
            {["Normals", "Texture Space", "Remesh", "Geometry Data", "Custom Properties"].map((t) => <Panel key={t} title={t} />)}
          </div>
        </div>
      </div>
    </section>
  );
}

export default function App() {
  return (
    <main className="grid h-screen grid-cols-[700fr_459fr] gap-[2px] overflow-hidden bg-[#181818] pt-px font-['Inter',sans-serif] text-[14px] leading-5 text-[#e6e6e6] [font-feature-settings:'cv05','cv08']">
      <div className="flex min-h-0 min-w-0 flex-col gap-[3px]"><Spreadsheet /><Viewport /></div>
      <div className="flex min-h-0 min-w-0 gap-[3px]">
        <Properties />
        <div className="w-[3px] rounded-tl bg-[#282828]" />
      </div>
    </main>
  );
}
